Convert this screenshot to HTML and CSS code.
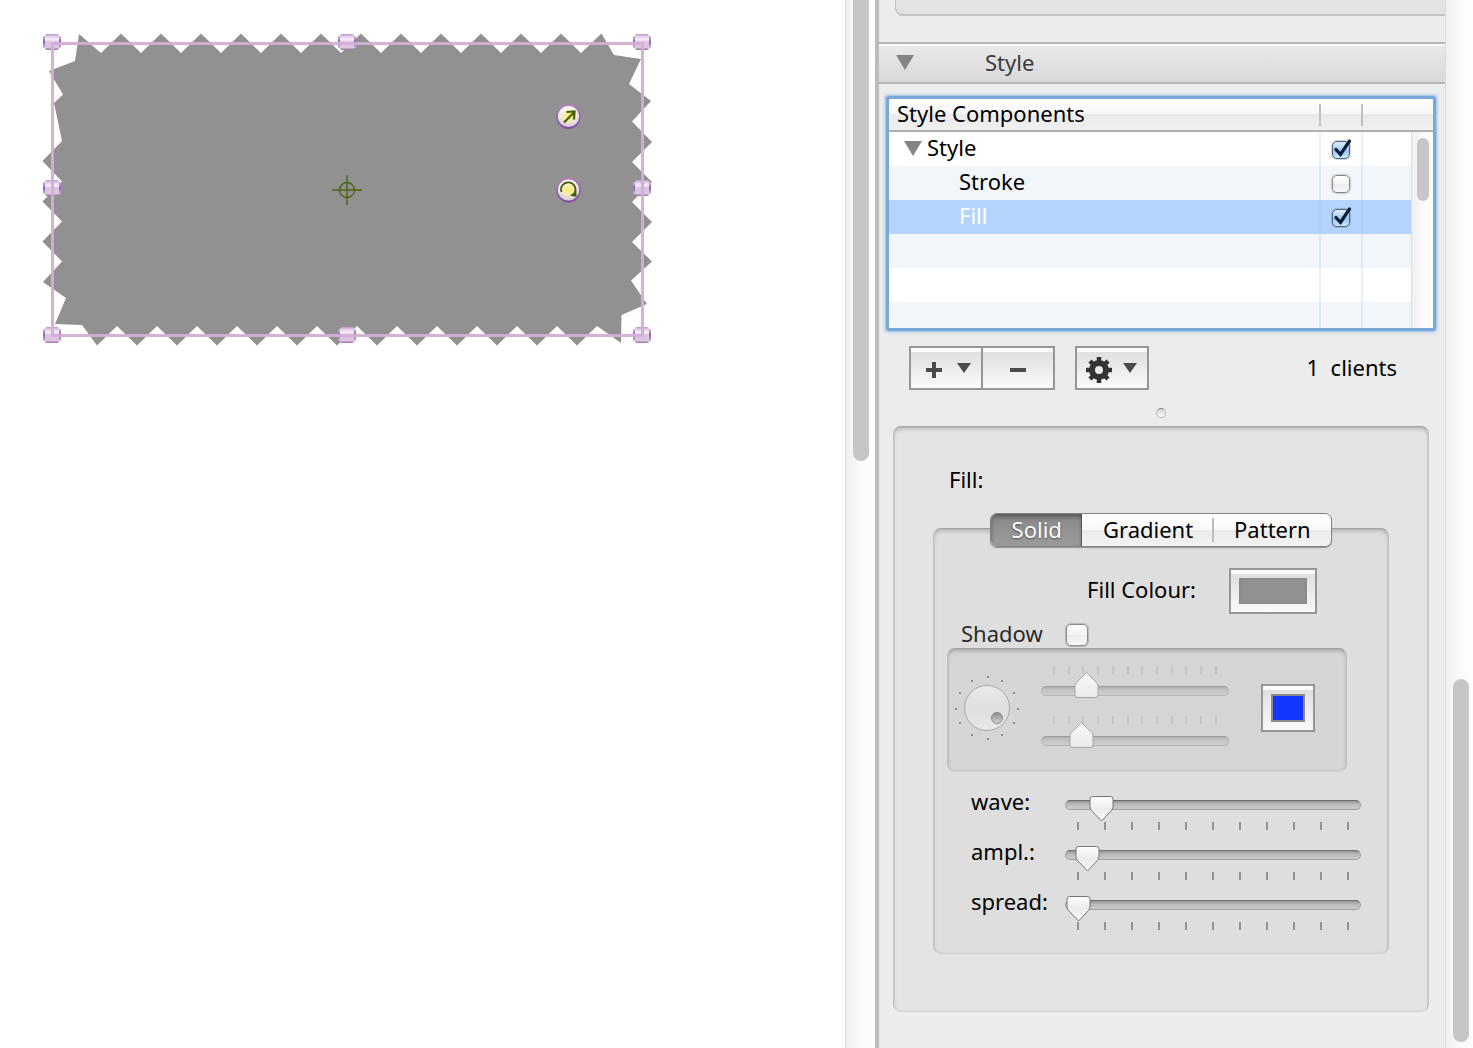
FILE: index.html
```html
<!DOCTYPE html>
<html lang="en">
<head>
<meta charset="utf-8">
<title>Style inspector</title>
<link rel="stylesheet" href="styles.css">
</head>
<body>
<div class="app">
  <main class="canvas">
    <svg class="drawing" width="700" height="380" role="img" aria-label="Selected rectangle with zig-zag edge">
      <defs>
        <linearGradient id="knobFill" x1="0" y1="0" x2="0" y2="1">
          <stop offset="0" stop-color="#b993c9"/>
          <stop offset=".15" stop-color="#e2d0e8"/>
          <stop offset=".35" stop-color="#f4edf6"/>
          <stop offset=".5" stop-color="#dcc3e0"/>
          <stop offset=".85" stop-color="#dcc6e0"/>
          <stop offset="1" stop-color="#8f6b98"/>
        </linearGradient>
        <linearGradient id="knobSide" x1="0" y1="0" x2="0" y2="1">
          <stop offset="0" stop-color="#cdb9dc"/>
          <stop offset=".5" stop-color="#8a62b0"/>
          <stop offset="1" stop-color="#cdb9dc"/>
        </linearGradient>
        <linearGradient id="ring" x1="0" y1="0" x2="0" y2="1">
          <stop offset="0" stop-color="#b57cc0"/>
          <stop offset="1" stop-color="#7d4fa6"/>
        </linearGradient>
        <linearGradient id="disc" x1="0" y1="0" x2="0" y2="1">
          <stop offset="0" stop-color="#fffdf8"/>
          <stop offset="1" stop-color="#d9c9d2"/>
        </linearGradient>
        <radialGradient id="glow">
          <stop offset="0" stop-color="#fdea5c"/>
          <stop offset=".4" stop-color="#fbee90" stop-opacity=".9"/>
          <stop offset="1" stop-color="#fbf2c8" stop-opacity="0"/>
        </radialGradient>
        <g id="knob">
          <rect x="-9" y="-6" width="18" height="12" rx="1" fill="url(#knobSide)"/>
          <rect x="-7" y="-8" width="14" height="16" rx="2" fill="url(#knobFill)"/>
        </g>
        <g id="badge">
          <circle r="11.5" fill="url(#disc)" stroke="url(#ring)" stroke-width="1.8"/>
          <circle r="9" fill="url(#glow)"/>
        </g>
      </defs>
      <polygon fill="#919191" points="79,34 101,53 121,33.5 141,53 161,33.5 181,53 201,33.5 221,53 241,33.5 261,53 281,33.5 301,53 321,33.5 341,53 361,33.5 381,53 401,33.5 421,53 441,33.5 461,53 481,33.5 501,53 521,33.5 541,53 561,33.5 581,53 601.5,33.5 614,55 641,59 629,84 651,101 632,121.5 652,142 632,162 652,182 632,202 652,222 632,242 652,261.5 631,280.5 647,304 621.5,315 621,343 597,326 577,345.5 557,326 537,345.5 517,326 497,345.5 477,326 457,345.5 437,326 417,345.5 397,326 377,345.5 357,326 337,345.5 317,326 297,345.5 277,326 257,345.5 237,326 217,345.5 197,326 177,345.5 157,326 137,345.5 117,326 97,345.5 82,325 55,324 66,298 43,282 62,261.5 42.500,241.500 62,221.500 42.500,201.500 62,181.500 42.500,161 62,141 54,103 63,94.500 49,71 75,61"/>
      <use href="#knob" x="52" y="42"/><use href="#knob" x="347" y="42"/><use href="#knob" x="642" y="42"/>
      <use href="#knob" x="52" y="188"/><use href="#knob" x="642" y="188"/>
      <use href="#knob" x="52" y="335"/><use href="#knob" x="347" y="335"/><use href="#knob" x="642" y="335"/>
      <rect x="52.500" y="43.500" width="590" height="292" fill="none" stroke="#d3aed6" stroke-width="3" stroke-opacity=".95"/>
      <g fill="none" stroke="#4d6414" stroke-width="1.400">
        <circle cx="347" cy="190" r="7.500"/>
        <path d="M332 190h30M347 175v30"/>
      </g>
      <g transform="translate(568.500 116.500)">
        <use href="#badge"/>
        <path d="M-4.500 6 5.500-4M-2-4.500 6-5 5.500 3" fill="none" stroke="#43600f" stroke-width="2.200"/>
      </g>
      <g transform="translate(568.500 190)">
        <use href="#badge"/>
        <path d="M-7 2A7.200 7.200 0 1 1 6.300 2.500" fill="none" stroke="#43600f" stroke-width="1.800"/>
        <path d="M1.500 5.500 8 .5V7z" fill="#43600f"/>
      </g>
    </svg>
  </main>
  <div class="scrollbar scrollbar-canvas"><div class="scroll-thumb"></div></div>
  <div class="divider"></div>
  <aside class="inspector">
    <div class="previous-group"></div>
    <h2 class="section-head"><span class="arrow"></span>Style</h2>
    <div class="components">
      <table class="tree">
        <colgroup><col><col class="col-check"><col class="col-rest"></colgroup>
        <thead><tr><th>Style Components</th><th><i class="sep"></i></th><th><i class="sep"></i></th></tr></thead>
        <tbody>
          <tr><td><span class="arrow"></span>Style</td><td><input type="checkbox" class="check" aria-label="Style" checked></td><td></td></tr>
          <tr><td class="child">Stroke</td><td><input type="checkbox" class="check" aria-label="Stroke"></td><td></td></tr>
          <tr class="selected"><td class="child">Fill</td><td><input type="checkbox" class="check" aria-label="Fill" checked></td><td></td></tr>
          <tr><td></td><td></td><td></td></tr>
          <tr><td></td><td></td><td></td></tr>
          <tr><td></td><td></td><td></td></tr>
        </tbody>
      </table>
      <div class="scrollbar scrollbar-tree"><div class="scroll-thumb"></div></div>
    </div>
    <div class="toolbar">
      <div class="button-pair">
        <button class="tool" aria-label="Add component"><svg width="48" height="24"><path d="M4 12h16M12 4v16" stroke="#4a4a4a" stroke-width="4"/><path d="M35 5h14l-7 10z" fill="#4a4a4a"/></svg></button>
        <button class="tool" aria-label="Remove component"><svg width="48" height="24"><path d="M16 12h16" stroke="#4a4a4a" stroke-width="4"/></svg></button>
      </div>
      <button class="tool" aria-label="Actions"><svg width="56" height="28"><g transform="translate(15 14)"><circle r="7" fill="none" stroke="#333" stroke-width="6"/><path d="M0-13V-8M0 8V13M-13 0H-8M8 0H13M-9-9-6-6M6 6 9 9M-9 9-6 6M6-6 9-9" stroke="#333" stroke-width="4.500"/></g><path d="M39 7h14l-7 10z" fill="#4a4a4a"/></svg></button>
      <output class="clients">1&nbsp; clients</output>
    </div>
    <div class="splitter"><span class="dimple"></span></div>
    <section class="well">
      <h3 class="well-title">Fill:</h3>
      <div class="group">
        <div class="tabs" role="tablist">
          <button class="tab tab-on" role="tab" aria-selected="true">Solid</button>
          <button class="tab" role="tab">Gradient</button>
          <button class="tab tab-last" role="tab">Pattern</button>
        </div>
        <div class="colour-row">
          <label for="fill-colour">Fill Colour:</label>
          <input type="color" id="fill-colour" class="swatch swatch-wide" value="#919191">
        </div>
        <div class="shadow-row">
          <label for="shadow">Shadow</label>
          <input type="checkbox" id="shadow" class="check check-large">
        </div>
        <div class="shadow-box">
          <svg class="dial" width="64" height="66" role="img" aria-label="Shadow angle">
            <defs>
              <linearGradient id="dialFill" x1="0" y1="0" x2="0" y2="1"><stop offset="0" stop-color="#ebebeb"/><stop offset=".5" stop-color="#dedede"/><stop offset="1" stop-color="#e8e8e8"/></linearGradient>
              <linearGradient id="dimpleFill" x1="0" y1="0" x2="0" y2="1"><stop offset="0" stop-color="#8c8c8c"/><stop offset="1" stop-color="#d2d2d2"/></linearGradient>
            </defs>
            <circle cx="32" cy="33" r="22.500" fill="url(#dialFill)" stroke="#a9a9a9"/>
            <circle cx="42" cy="43" r="5.500" fill="url(#dimpleFill)" stroke="#8c8c8c"/>
            <path d="M32 2h2M32 64h2M0 34h2M62 34h2M16 6h2M46 6h2M4 18h2M58 18h2M4 48h2M58 48h2M16 60h2M46 60h2" stroke="#8e8e8e" stroke-width="2"/>
          </svg>
          <div class="shadow-sliders">
            <div class="mini">
              <div class="mini-ticks"><i></i><i></i><i></i><i></i><i></i><i></i><i></i><i></i><i></i><i></i><i></i><i></i></div>
              <input type="range" class="slider slider-up" aria-label="Shadow distance" min="0" max="100" value="20" disabled>
            </div>
            <div class="mini">
              <div class="mini-ticks"><i></i><i></i><i></i><i></i><i></i><i></i><i></i><i></i><i></i><i></i><i></i><i></i></div>
              <input type="range" class="slider slider-up" aria-label="Shadow blur" min="0" max="100" value="17" disabled>
            </div>
          </div>
          <input type="color" class="swatch" aria-label="Shadow colour" value="#1437ff">
        </div>
        <div class="param">
          <label for="wave">wave:</label>
          <div class="param-slider"><input type="range" id="wave" class="slider" min="0" max="200" value="17"><div class="ticks"></div></div>
        </div>
        <div class="param">
          <label for="ampl">ampl.:</label>
          <div class="param-slider"><input type="range" id="ampl" class="slider" min="0" max="200" value="7"><div class="ticks"></div></div>
        </div>
        <div class="param">
          <label for="spread">spread:</label>
          <div class="param-slider"><input type="range" id="spread" class="slider" min="0" max="200" value="0"><div class="ticks"></div></div>
        </div>
      </div>
    </section>
  </aside>
  <div class="scrollbar scrollbar-panel"><div class="scroll-thumb"></div></div>
</div>
</body>
</html>
```

FILE: styles.css
```css
* { box-sizing: border-box; }

body {
  margin: 0;
  background: #fff;
  color: #000;
  font: 22px/30px "Noto Sans", "Open Sans", sans-serif;
}

button, input { margin: 0; padding: 0; font: inherit; color: inherit; }
h2, h3 { margin: 0; font: inherit; }

.app {
  display: grid;
  grid-template-columns: minmax(0, 1fr) 30px 4px 566px 28px;
  min-height: 100vh;
}

.canvas { overflow: hidden; }
.drawing { display: block; }

/* Scroll bars */
.scrollbar {
  display: flex;
  flex-direction: column;
  border-left: 1px solid #dcdcdc;
  background: linear-gradient(90deg, #f0f0f0, #fcfcfc 60%, #fdfdfd);
}
.scroll-thumb { background: #c6c6c6; border-radius: 8px; }
.scrollbar-canvas { padding-left: 7px; }
.scrollbar-canvas .scroll-thumb { width: 16px; height: 44vh; border-radius: 0 0 8px 8px; }
.scrollbar-panel { padding: 0 0 6px 7px; justify-content: flex-end; }
.scrollbar-panel .scroll-thumb { width: 16px; height: 363px; }
.divider { background: #bcbcbc; }

/* Inspector column */
.inspector {
  display: flex;
  flex-direction: column;
  overflow: hidden;
  background: #ececec;
}
.previous-group {
  height: 16px;
  margin: 0 -20px 26px 16px;
  background: #e3e3e3;
  border: solid #c2c2c2;
  border-width: 0 1px 2px;
  border-radius: 0 0 8px 8px;
}
.arrow {
  display: inline-block;
  border: solid transparent;
  border-width: 15px 9px 0;
  border-top-color: #858585;
}
.section-head {
  display: flex;
  align-items: center;
  height: 42px;
  padding: 0 0 2px 17px;
  border: solid #b5b5b5;
  border-width: 2px 0;
  background: linear-gradient(#fafafa 0 2px, #e9e9e9 2px, #d8d8d8);
  color: #3c3c3c;
}
.section-head .arrow { margin-right: 71px; }

/* Component tree */
.components {
  position: relative;
  height: 229px;
  margin: 15px 12px 0 10px;
  overflow: hidden;
  background: #fff;
  outline: 3px solid #77a8d8;
  border-radius: 1px;
  box-shadow: 0 0 3px 4px #8fb9e2;
}
.tree { width: 100%; table-layout: fixed; border-collapse: separate; border-spacing: 0; }
.col-check { width: 42px; }
.col-rest { width: 72px; }
.tree th, .tree td { padding: 0; text-align: left; font-weight: 400; }
.tree th {
  height: 33px;
  border-bottom: 2px solid #b0b0b0;
  background: linear-gradient(#fff, #f6f6f6 50%, #eaeaea 50%, #f0f0f0);
  line-height: 28px;
}
.tree th:first-child { padding: 0 0 3px 8px; }
.sep { display: block; width: 2px; height: 22px; background: #bfbfbf; }
.tree td { height: 34px; vertical-align: top; }
.tree td:first-child { padding-left: 15px; }
.tree td.child { padding-left: 70px; }
.tree td + td { border-left: 2px solid rgba(140, 200, 255, .25); }
.tree tbody tr:nth-child(even) { background: #f2f6fb; }
.tree tbody tr.selected { background: #b4d4fe; color: #fff; }
.tree .arrow { margin-right: 5px; }
.scrollbar-tree {
  position: absolute;
  top: 33px;
  right: 0;
  bottom: 0;
  width: 22px;
  padding: 6px 0 0 5px;
}
.scrollbar-tree .scroll-thumb { width: 12px; height: 63px; }

/* Tick boxes */
.check {
  appearance: none;
  display: block;
  width: 18px;
  height: 18px;
  margin: 9px auto 0 11px;
  border: 1px solid #8a8a8a;
  border-radius: 5px;
  background: linear-gradient(#fff, #f4f4f4 50%, #ececec 50%, #f8f8f8);
  box-shadow: 0 0 1px 1px rgba(0, 0, 0, .18);
}
.check:checked {
  border-color: #4d6483;
  background: linear-gradient(#dcecfa, #a9cdf2 50%, #8fc0f0 50%, #cdeafe);
}
.check:checked::before {
  content: "";
  display: block;
  width: 22px;
  height: 20px;
  margin: -4px 0 0 -1px;
  background: url("data:image/svg+xml,%3Csvg xmlns='http://www.w3.org/2000/svg' width='22' height='20'%3E%3Cpath d='M4 11.500 8.500 16.500 17.500 3' fill='none' stroke='%23051c38' stroke-width='3.200' stroke-linecap='round'/%3E%3C/svg%3E") no-repeat;
}
.check-large { width: 22px; height: 22px; margin: 0; }

/* Buttons under the tree */
.toolbar { display: flex; align-items: center; padding: 18px 48px 0 30px; }
.button-pair { display: flex; margin-right: 20px; }
.tool {
  display: grid;
  place-items: center;
  width: 74px;
  height: 44px;
  border: 2px solid #969696;
  background: linear-gradient(#fcfcfc 0 4px, #dfdfdf 4px, #fafafa);
}
.tool + .tool { margin-left: -2px; }
.tool svg { overflow: visible; margin-top: 3px; }
.clients { margin: 0 0 0 auto; padding-bottom: 2px; }
.splitter { display: flex; justify-content: center; padding: 18px 2px 8px 0; }
.dimple {
  width: 10px;
  height: 10px;
  border: 1px solid #b8b8b8;
  border-top-color: #8c8c8c;
  border-radius: 50%;
  background: linear-gradient(#d0d0d0, #fff);
}

/* Settings well */
.well, .group, .shadow-box {
  border: 1px solid #bfbfbf;
  border-top-color: #a2a2a2;
  border-bottom-color: #d2d2d2;
  border-radius: 8px;
  box-shadow: inset 0 3px 4px -1px rgba(0, 0, 0, .2), inset 0 0 2px rgba(0, 0, 0, .12);
}
.well { margin: 0 16px 36px 14px; padding: 37px 39px 57px; background: #e4e4e4; }
.well-title { padding-left: 16px; margin-bottom: 34px; }
.group { padding: 0 27px 16px 13px; background: #dedede; }

.tabs {
  display: flex;
  width: 342px;
  height: 34px;
  margin: -16px 0 21px 43px;
  border: 1px solid #858585;
  border-radius: 7px;
  overflow: hidden;
  background: linear-gradient(#fff, #f8f8f8 50%, #ebebeb 50%, #f3f3f3);
  box-shadow: 0 1px 1px rgba(0, 0, 0, .35);
}
.tab {
  flex: 132 0 0;
  padding-bottom: 2px;
  border: 0;
  background: linear-gradient(#bdbdbd, #bdbdbd) right center / 2px 24px no-repeat;
  line-height: 30px;
}
.tab-last { flex-grow: 118; background: none; }
.tab-on {
  flex-grow: 92;
  background: linear-gradient(#7d7d7d, #8e8e8e 30%, #9b9b9b);
  box-shadow: inset 0 2px 4px rgba(0, 0, 0, .35), inset -1px 0 #666;
  color: #fff;
  text-shadow: 0 1px 2px rgba(0, 0, 0, .5);
}

.colour-row { display: flex; align-items: center; justify-content: flex-end; gap: 33px; padding-right: 44px; }
.colour-row label, .shadow-row label { padding-bottom: 4px; }
.swatch {
  appearance: none;
  width: 54px;
  height: 48px;
  padding: 8px;
  border: 2px solid #969696;
  background: linear-gradient(#fcfcfc 0 4px, #dfdfdf 4px, #fafafa);
}
.swatch::-webkit-color-swatch-wrapper { padding: 0; }
.swatch::-webkit-color-swatch { border: 2px solid #8c8c8c; border-radius: 0; }
.swatch-wide { width: 88px; height: 46px; }

.shadow-row { display: flex; align-items: center; gap: 23px; height: 22px; margin: 10px 0 2px 14px; color: #2b2b2b; }
.shadow-box {
  display: flex;
  align-items: center;
  gap: 22px;
  width: 400px;
  height: 124px;
  padding: 0 31px 4px 7px;
  margin-bottom: 15px;
  background: #d5d5d5;
}
.shadow-box .swatch { margin-left: auto; }

/* Sliders */
.slider { appearance: none; display: block; width: 100%; height: 28px; background: none; }
.slider::-webkit-slider-runnable-track {
  height: 10px;
  border: 1px solid #a0a0a0;
  border-top-color: #6e6e6e;
  border-radius: 5px;
  background: linear-gradient(#969696, #bcbcbc 45%, #cacaca);
}
.slider::-webkit-slider-thumb {
  appearance: none;
  width: 26px;
  height: 28px;
  margin-top: -7px;
  background: url("data:image/svg+xml,%3Csvg xmlns='http://www.w3.org/2000/svg' width='26' height='28'%3E%3Cdefs%3E%3ClinearGradient id='a' x1='0' y1='0' x2='0' y2='1'%3E%3Cstop offset='0' stop-color='%23fff'/%3E%3Cstop offset='.5' stop-color='%23ececec'/%3E%3Cstop offset='1' stop-color='%23fafafa'/%3E%3C/linearGradient%3E%3C/defs%3E%3Cpath d='M3.500 2.500H21.500Q24 2.500 24 5V13Q24 15 22.500 16.500L12.500 27 2.500 16.500Q1 15 1 13V5Q1 2.500 3.500 2.500z' fill='url(%23a)' stroke='%23757575'/%3E%3C/svg%3E") no-repeat;
}
.slider-up::-webkit-slider-runnable-track {
  border-color: #b4b4b4;
  border-top-color: #9c9c9c;
  background: linear-gradient(#b2b2b2, #c6c6c6 50%, #cdcdcd);
}
.slider-up::-webkit-slider-thumb {
  margin-top: -16px;
  background-image: url("data:image/svg+xml,%3Csvg xmlns='http://www.w3.org/2000/svg' width='26' height='28'%3E%3Cdefs%3E%3ClinearGradient id='a' x1='0' y1='0' x2='0' y2='1'%3E%3Cstop offset='0' stop-color='%23fafafa'/%3E%3Cstop offset='1' stop-color='%23e9e9e9'/%3E%3C/linearGradient%3E%3C/defs%3E%3Cpath d='M3.500 26.500H21.500Q24 26.500 24 24V15Q24 13 22.500 11.500L12.500 1.500 2.500 11.500Q1 13 1 15V24Q1 26.500 3.500 26.500z' fill='url(%23a)' stroke='%23a6a6a6'/%3E%3C/svg%3E");
}
.shadow-sliders { width: 188px; padding-top: 16px; }
.mini { height: 50px; }
.mini-ticks { display: flex; justify-content: space-between; margin: 0 12px 3px; }
.mini-ticks i { width: 2px; height: 8px; background: #c6c6c6; }

.param { display: flex; justify-content: space-between; height: 50px; padding-left: 24px; line-height: 28px; }
.param-slider { width: 296px; padding-top: 4px; }
.ticks {
  width: 272px;
  height: 8px;
  margin: 3px 12px 0;
  background: repeating-linear-gradient(90deg, #929292 0 2px, transparent 2px 27px);
}
```
